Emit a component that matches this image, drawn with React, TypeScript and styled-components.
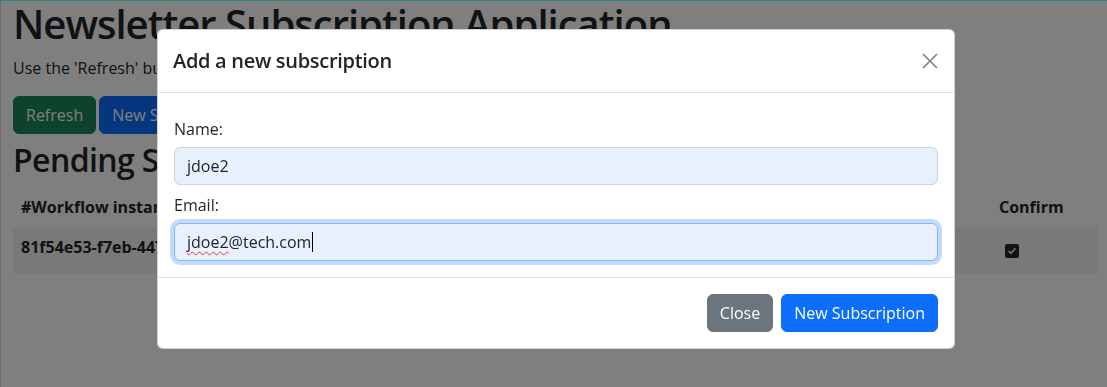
import React from 'react';
import styled, { createGlobalStyle } from 'styled-components';

const GlobalStyle = createGlobalStyle`
    * {
        box-sizing: border-box;
    }
    html, body {
        margin: 0;
        padding: 0;
    }
    body {
        font-family: 'Open Sans', 'Noto Sans', sans-serif;
        font-size: 16px;
        line-height: 1.5;
        color: #212529;
        background: #fff;
        overflow: hidden;
    }
`;

interface Subscription {
    id: string;
    name: string;
    email: string;
    confirmed: boolean;
}

const pending: Subscription[] = [
    {
        id: '81f54e53-f7eb-4475-9c1d-3b2a7e0f6d11',
        name: 'jdoe',
        email: 'jdoe@tech.com',
        confirmed: true
    }
];

const WindowEdge = styled.div`
    position: fixed;
    top: 0;
    left: 0;
    right: 0;
    height: 1px;
    background: #2b8787;
    z-index: 3;
`;

const Page = styled.main`
    height: 387px;
    padding: 0 9px 0 12px;
    border-left: 1px solid #dcdcdc;
`;

const Title = styled.h1`
    margin: 0 0 8px;
    font-size: 40px;
    font-weight: 600;
    letter-spacing: -1px;
    line-height: 1.2;
`;

const Intro = styled.p`
    margin: 0 0 16px;
`;

const Toolbar = styled.div`
    display: flex;
    gap: 3px;
`;

type Variant = 'primary' | 'secondary' | 'success';

const buttonColours: Record<Variant, string> = {
    primary: '#0d6efd',
    secondary: '#6c757d',
    success: '#198754'
};

const Button = styled.button<{ $variant: Variant }>`
    height: 38px;
    padding: 6px 12px;
    font: inherit;
    line-height: 24px;
    color: #fff;
    background: ${(p) => buttonColours[p.$variant]};
    border: 1px solid ${(p) => buttonColours[p.$variant]};
    border-radius: 6px;
    cursor: pointer;
`;

const SectionTitle = styled.h2`
    margin: 7px 0 8px;
    font-size: 32px;
    font-weight: 600;
    letter-spacing: -0.6px;
    line-height: 1.2;
`;

const Table = styled.table`
    width: 100%;
    table-layout: fixed;
    border-collapse: collapse;
`;

const HeadCell = styled.th<{ $width?: number }>`
    width: ${(p) => (p.$width ? `${p.$width}px` : 'auto')};
    padding: 8px;
    text-align: left;
    font-weight: 700;
    line-height: 24px;
    white-space: nowrap;
    overflow: hidden;
`;

const BodyRow = styled.tr<{ $striped: boolean }>`
    background: ${(p) => (p.$striped ? 'rgba(0, 0, 0, 0.05)' : 'transparent')};
`;

const Cell = styled.td`
    padding: 8px 8px 15px;
    vertical-align: top;
    font-weight: 700;
    line-height: 24px;
    white-space: nowrap;
    overflow: hidden;
`;

const Check = styled.span`
    display: block;
    width: 14px;
    height: 14px;
    margin: 5px 0 4px 6px;
`;

const Backdrop = styled.div`
    position: fixed;
    inset: 0;
    z-index: 2;
    display: flex;
    align-items: flex-start;
    padding: 29px 0 0 157px;
    background: rgba(0, 0, 0, 0.5);
`;

const Dialog = styled.section`
    width: 798px;
    display: flex;
    flex-direction: column;
    background: #fff;
    border: 1px solid rgba(0, 0, 0, 0.175);
    border-radius: 6px;
`;

const DialogHeader = styled.header`
    display: flex;
    align-items: center;
    justify-content: space-between;
    padding: 16px 16px 16px 15px;
    border-bottom: 1px solid #dee2e6;
`;

const DialogTitle = styled.h5`
    margin: 0;
    font-size: 20px;
    font-weight: 600;
    letter-spacing: -0.3px;
    line-height: 1.5;
`;

const CloseButton = styled.button`
    width: 16px;
    height: 16px;
    padding: 0;
    border: 0;
    background: none;
    opacity: 0.5;
    cursor: pointer;
    display: flex;
`;

const DialogBody = styled.div`
    display: flex;
    flex-direction: column;
    gap: 8px;
    padding: 24px 16px 16px;
`;

const FieldGroup = styled.div`
    display: flex;
    flex-direction: column;
`;

const Label = styled.label`
    margin-bottom: 6px;
    line-height: 24px;
`;

const Field = styled.div<{ $focused?: boolean }>`
    height: 38px;
    display: flex;
    align-items: center;
    padding: 6px 12px;
    line-height: 24px;
    background: #e8f0fe;
    border: 1px solid ${(p) => (p.$focused ? '#86b7fe' : '#ced4da')};
    border-radius: 6px;
    box-shadow: ${(p) => (p.$focused ? '0 0 0 4px rgba(13, 110, 253, 0.25)' : 'none')};
`;

const Misspelled = styled.span`
    text-decoration: underline wavy #e53935;
    text-decoration-thickness: 1px;
    text-underline-offset: 3px;
    text-decoration-skip-ink: none;
`;

const Caret = styled.span`
    display: inline-block;
    width: 1px;
    height: 20px;
    margin-left: 1px;
    background: #000;
`;

const DialogFooter = styled.footer`
    display: flex;
    justify-content: flex-end;
    gap: 8px;
    padding: 16px;
    border-top: 1px solid #dee2e6;
`;

function CheckMark() {
    return (
        <svg width="14" height="14" viewBox="0 0 14 14">
            <rect width="14" height="14" rx="2" fill="#262626" />
            <path d="M4 7.2l2 2 4-4.4" fill="none" stroke="#fff" strokeWidth="1.4" strokeLinecap="round" strokeLinejoin="round" />
        </svg>
    );
}

function renderRow(sub: Subscription, index: number) {
    return (
        <BodyRow key={sub.id} $striped={index % 2 === 0}>
            <Cell>{sub.id}</Cell>
            <Cell>{sub.name}</Cell>
            <Cell>{sub.email}</Cell>
            <Cell>
                <Check>{sub.confirmed && <CheckMark />}</Check>
            </Cell>
        </BodyRow>
    );
}

export default function App() {
    return (
        <>
            <GlobalStyle />
            <WindowEdge />
            <Page>
                <Title>Newsletter Subscription Application</Title>
                <Intro>Use the 'Refresh' button to reload the list of pending subscriptions.</Intro>
                <Toolbar>
                    <Button $variant="success">Refresh</Button>
                    <Button $variant="primary">New Subscription</Button>
                </Toolbar>
                <SectionTitle>Pending Subscriptions</SectionTitle>
                <Table>
                    <thead>
                        <tr>
                            <HeadCell $width={420}>#Workflow instance ID</HeadCell>
                            <HeadCell $width={260}>Name</HeadCell>
                            <HeadCell>Email</HeadCell>
                            <HeadCell $width={107}>Confirm</HeadCell>
                        </tr>
                    </thead>
                    <tbody>{pending.map(renderRow)}</tbody>
                </Table>
            </Page>
            <Backdrop>
                <Dialog role="dialog" aria-label="Add a new subscription">
                    <DialogHeader>
                        <DialogTitle>Add a new subscription</DialogTitle>
                        <CloseButton aria-label="Close">
                            <svg width="16" height="16" viewBox="0 0 16 16">
                                <path d="M1 1l14 14M15 1L1 15" stroke="#000" strokeWidth="1.6" />
                            </svg>
                        </CloseButton>
                    </DialogHeader>
                    <DialogBody>
                        <FieldGroup>
                            <Label>Name:</Label>
                            <Field>jdoe2</Field>
                        </FieldGroup>
                        <FieldGroup>
                            <Label>Email:</Label>
                            <Field $focused>
                                <Misspelled>jdoe2</Misspelled>@tech.com
                                <Caret />
                            </Field>
                        </FieldGroup>
                    </DialogBody>
                    <DialogFooter>
                        <Button $variant="secondary">Close</Button>
                        <Button $variant="primary">New Subscription</Button>
                    </DialogFooter>
                </Dialog>
            </Backdrop>
        </>
    );
}
